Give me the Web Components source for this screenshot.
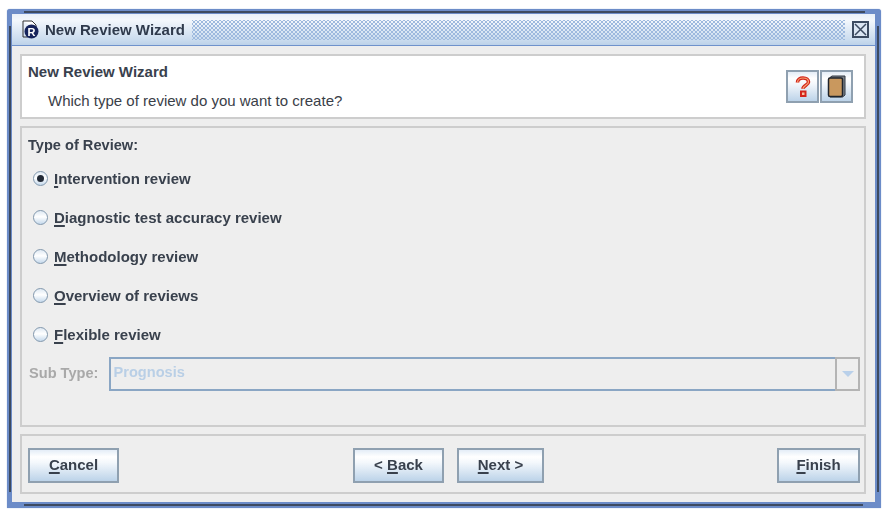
<!DOCTYPE html>
<html lang="en"><head><meta charset="utf-8"><title>New Review Wizard</title>
<style>
html,body{margin:0;padding:0;background:#fff;height:515px;overflow:hidden}
body{font:bold 15px "Liberation Sans",Arial,sans-serif;color:#39414d}
u{text-decoration-thickness:1.5px;text-underline-offset:2px}
</style></head><body>
<template id="t-window"><style>
:host{display:flex;flex-direction:column;box-sizing:border-box;position:relative;width:874px;height:499px;margin:9px 0 0 7px;background:#eeeeee;border:solid #6c8cc8;border-width:5px 6px 6px 5px;border-radius:3px 3px 0 0;box-shadow:0 0 1px #6c8cc8;filter:blur(.4px)}
.bt,.bb,.bl,.br{position:absolute;background:#3d4a60}
.bt{top:-3px;left:12px;right:10px;height:1.5px}
.bb{bottom:-3.5px;left:12px;right:12px;height:1.5px}
.bl{left:-3px;top:12px;bottom:10px;width:1.5px}
.br{right:-3.5px;top:12px;bottom:10px;width:1.5px}
.body{flex:1;display:flex;flex-direction:column;gap:7px;padding:8px 9px 8px 8px;min-height:0}
</style><i class="bt"></i><i class="bb"></i><i class="bl"></i><i class="br"></i><slot name="title"></slot><div class="body"><slot></slot></div></template>

<template id="t-title"><style>
:host{display:flex;align-items:center;height:32px;box-sizing:border-box;padding:0 6px 0 10px;background:linear-gradient(#e9f0f9,#f3f7fc 20%,#c9dbee 85%,#bdd2e9);border-bottom:1.5px solid #6f92cc;border-radius:3px 3px 0 0;color:#2f3a4c}
svg{display:block;flex:none}
.t{margin-left:5px;white-space:nowrap}
.dots{flex:1;height:20px;margin:0 7px;background-image:radial-gradient(circle,#9db9de .8px,transparent 1px),radial-gradient(circle,#9db9de .8px,transparent 1px);background-size:4px 4px;background-position:0 0,2px 2px}
.x{flex:none;box-sizing:border-box;width:17px;height:17px;border:2px solid #3b4a60;background:#dbe6f3;display:block}
</style>
<svg width="18" height="19" viewBox="0 0 18 19"><path d="M1 1H10L14 5V9" fill="#fff" stroke="#333" stroke-width="1"/><path d="M1 1V17H6" fill="none" stroke="#333"/><circle cx="9.500" cy="11.500" r="7" fill="#16245c"/><text x="9.500" y="15.500" text-anchor="middle" font-family="Liberation Sans" font-weight="700" font-size="11" fill="#fff">R</text></svg>
<span class="t"><slot></slot></span><span class="dots"></span>
<svg class="x" viewBox="0 0 13 13"><path d="M1 1L12 12M12 1L1 12" stroke="#3b4a60" stroke-width="1.500" fill="none"/></svg></template>

<template id="t-panel"><style>
:host{display:block;box-sizing:border-box;border:2px solid #cdcdcd;background:var(--bg,#eeeeee)}
</style><slot></slot></template>

<template id="t-button"><style>
:host{display:inline-flex;align-items:center;justify-content:center;box-sizing:border-box;height:35px;padding-bottom:2px;border:2px solid #8fa0b0;background:linear-gradient(#e4edf7,#fff 22%,#f4f8fc 40%,#bcd3e9);color:#39414d;white-space:nowrap;flex:none}
</style><slot></slot></template>

<template id="t-radio"><style>
:host{display:flex;align-items:center;height:39px;padding-left:5px;color:var(--c,#39414d);white-space:nowrap}
.o{box-sizing:border-box;width:15px;height:15px;border-radius:50%;border:1.5px solid #8298ad;background:linear-gradient(#dfe9f3,#fff 45%,#c5d9ec);margin-right:6px;display:flex;align-items:center;justify-content:center;flex:none}
:host([checked]) .o::after{content:"";width:7.5px;height:7.5px;border-radius:50%;background:#222a36}
</style><span class="o"></span><span><slot></slot></span></template>

<template id="t-combo"><style>
:host{flex:1;display:flex;height:34px;box-sizing:border-box;font-size:14.6px}
.v{flex:1;box-sizing:border-box;border:2px solid #8aa6c4;border-right:0;background:#eeeeee;color:#b9cfe6;padding:0 0 2px 2px;display:flex;align-items:center}
.a{flex:none;box-sizing:border-box;width:25px;border:2px solid #b4b4b4;display:flex;align-items:center;justify-content:center}
.a::after{content:"";border:solid transparent;border-width:6px 6px 0;border-top-color:#b9d0ea}
</style><span class="v"><slot></slot></span><span class="a"></span></template>

<rm-window>
 <rm-title slot="title">New Review Wizard</rm-title>
 <rm-panel style="--bg:#fff;height:65px">
  <rm-header>
   <span slot="heading">New Review Wizard</span>
   <span slot="sub">Which type of review do you want to create?</span>
   <rm-button slot="tools" style="width:33px;height:33px;padding:0"><svg width="16" height="21" viewBox="0 0 16 21"><path d="M2.500 6.500C2.500 3.500 5 2 8 2C11.500 2 13.500 3.800 13.500 6C13.500 9 8 9.500 8 12.800" fill="none" stroke="#d4261c" stroke-width="3.600"/><path d="M2.500 6.500C2.500 3.500 5 2 8 2C11.500 2 13.500 3.800 13.500 6C13.500 9 8 9.500 8 12.800" fill="none" stroke="#f6a878" stroke-width="1.200"/><rect x="6" y="15.500" width="4.500" height="4.500" fill="#f6c0a0" stroke="#d4261c" stroke-width="2"/></svg></rm-button>
   <rm-button slot="tools" style="width:33px;height:33px;padding:0"><svg width="20" height="23" viewBox="0 0 20 23"><path d="M3 2.500L5 1H18V20L15.500 22H3Z" fill="#7d838b" stroke="#2f3640"/><rect x="1.500" y="3" width="14" height="18.500" rx="1.500" fill="#c9985e" stroke="#1f242c" stroke-width="1.500"/></svg></rm-button>
  </rm-header>
 </rm-panel>
 <rm-panel style="height:302px">
  <rm-form>
   <span slot="legend">Type of Review:</span>
   <rm-radio checked><u>I</u>ntervention review</rm-radio>
   <rm-radio><u>D</u>iagnostic test accuracy review</rm-radio>
   <rm-radio><u>M</u>ethodology review</rm-radio>
   <rm-radio><u>O</u>verview of reviews</rm-radio>
   <rm-radio><u>F</u>lexible review</rm-radio>
   <span slot="sublabel">Sub Type:</span>
   <rm-combo slot="combo">Prognosis</rm-combo>
  </rm-form>
 </rm-panel>
 <rm-panel style="height:60px">
  <rm-footer>
   <rm-button slot="left" style="width:91px"><span><u>C</u>ancel</span></rm-button>
   <rm-button slot="mid" style="width:91px"><span>&lt; <u>B</u>ack</span></rm-button>
   <rm-button slot="mid" style="width:87px"><span><u>N</u>ext &gt;</span></rm-button>
   <rm-button slot="right" style="width:83px"><span><u>F</u>inish</span></rm-button>
  </rm-footer>
 </rm-panel>
</rm-window>
<script>
function reg(name,html){customElements.define(name,class extends HTMLElement{constructor(){super();const r=this.attachShadow({mode:"open"});if(html)r.innerHTML=html;else r.appendChild(document.getElementById("t-"+name.slice(3)).content.cloneNode(true));}});}
["rm-window","rm-title","rm-panel","rm-button","rm-radio","rm-combo"].forEach(n=>reg(n));
reg("rm-header",`<style>:host{display:flex;height:100%;box-sizing:border-box;padding:0 11px 0 6px}
.l{flex:1;display:flex;flex-direction:column;padding-top:6px}
.h{height:20px;line-height:20px}
.s{margin:9px 0 0 20px;height:20px;line-height:20px;font-weight:400;color:#3a4048}
.r{display:flex;align-items:center;gap:1px}</style>
<div class="l"><div class="h"><slot name="heading"></slot></div><div class="s"><slot name="sub"></slot></div></div><div class="r"><slot name="tools"></slot></div>`);
reg("rm-form",`<style>:host{display:block;padding:6px 4px 0 6px}
.g{height:22px;line-height:22px;margin-bottom:3px;font-size:14.6px}
.c{display:flex;align-items:center;gap:11px;color:#a9a9a9;margin-top:3px;padding-left:1px;font-size:14.6px;line-height:15px}
</style><div class="g"><slot name="legend"></slot></div><slot></slot><div class="c"><slot name="sublabel"></slot><slot name="combo"></slot></div>`);
reg("rm-footer",`<style>:host{display:flex;align-items:center;height:100%;padding:2px 4px 0 6px;box-sizing:border-box}
.m{flex:1;display:flex;justify-content:center;gap:13px;margin-left:1px}
</style><slot name="left"></slot><div class="m"><slot name="mid"></slot></div><slot name="right"></slot>`);
</script>
</body></html>
